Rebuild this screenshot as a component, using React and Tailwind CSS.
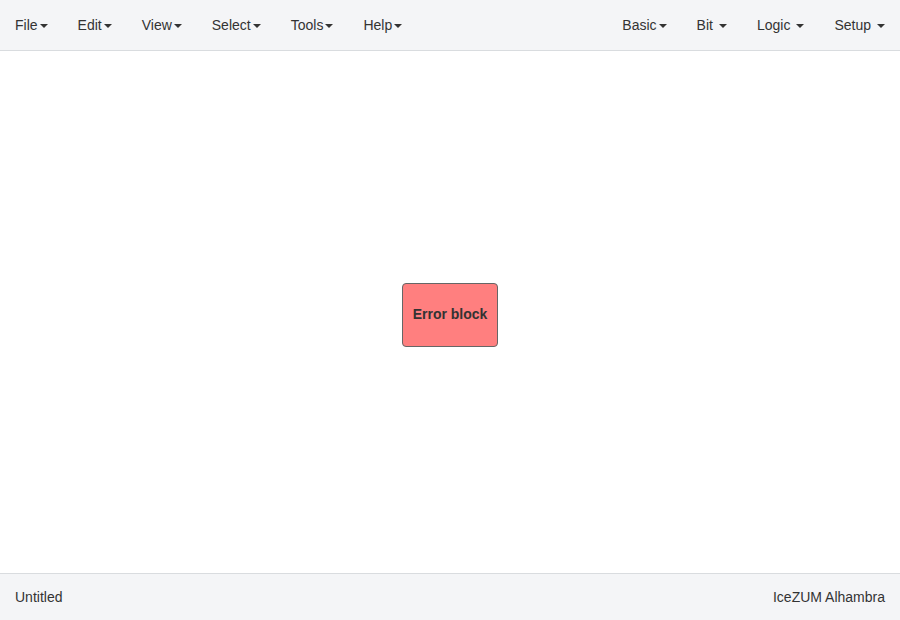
import React from 'react'

const leftMenus = ['File', 'Edit', 'View', 'Select', 'Tools', 'Help']
const rightMenus = [
  { label: 'Basic', gap: false },
  { label: 'Bit', gap: true },
  { label: 'Logic', gap: true },
  { label: 'Setup', gap: true },
]

// Small bootstrap-style caret
const Caret = ({ spaced }) => (
  <span
    className={
      'inline-block w-0 h-0 align-middle border-t-[4px] border-t-[#333] border-x-[4px] border-x-transparent ' +
      (spaced ? 'ml-[6px]' : 'ml-[2px]')
    }
  />
)

const MenuItem = ({ label, spaced }) => (
  <li className="px-[15px] py-[15px] leading-5 cursor-pointer">
    {label}
    <Caret spaced={spaced} />
  </li>
)

export default function App() {
  return (
    <div
      className="flex flex-col h-[620px] w-[900px] bg-white text-[14px] text-[#333]"
      style={{ fontFamily: '"Liberation Sans", Arial, sans-serif' }}
    >
      {/* Top menu bar */}
      <nav className="flex justify-between h-[51px] bg-[#f4f5f7] border-b border-[#d9dcdf]">
        <ul className="flex">
          {leftMenus.map((m) => (
            <MenuItem key={m} label={m} />
          ))}
        </ul>
        <ul className="flex">
          {rightMenus.map((m) => (
            <MenuItem key={m.label} label={m.label} spaced={m.gap} />
          ))}
        </ul>
      </nav>

      {/* Canvas */}
      <main className="flex-1 flex items-center justify-center">
        <div className="w-[96px] h-[64px] mt-[6px] pb-[2px] flex items-center justify-center rounded-[4px] border border-[#666] bg-[#ff7f7f] font-bold text-[#333]">
          Error block
        </div>
      </main>

      {/* Footer */}
      <footer className="flex justify-between items-center h-[47px] px-[15px] bg-[#f4f5f7] border-t border-[#d9dcdf]">
        <span>Untitled</span>
        <span>IceZUM Alhambra</span>
      </footer>
    </div>
  )
}
